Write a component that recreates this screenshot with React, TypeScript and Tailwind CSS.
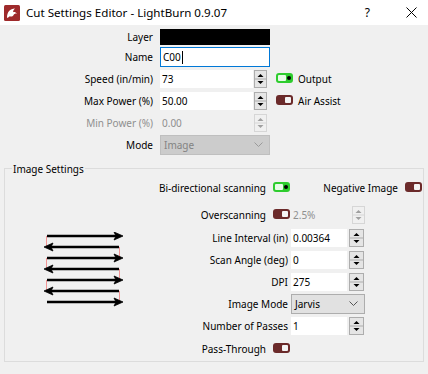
import React from "react";

const font = "font-['Noto_Sans',sans-serif]";

function Spin({ w = 12, disabled = false }: { w?: number; disabled?: boolean }) {
  const c = w / 2;
  const line = disabled ? "#d6d6d6" : "#adadad";
  const tri = disabled ? "#a0a0a0" : "#000000";
  return (
    <svg width={w} height={18} className="shrink-0">
      <rect x={0.5} y={0.5} width={w - 1} height={17} fill={disabled ? "#f0f0f0" : "#e5e5e5"} stroke={line} />
      <line x1={1} x2={w - 1} y1={9} y2={9} stroke={line} />
      <polygon points={`${c - 3},7 ${c + 3},7 ${c},4`} fill={tri} />
      <polygon points={`${c - 3},11 ${c + 3},11 ${c},14`} fill={tri} />
    </svg>
  );
}

function ToggleOn() {
  return (
    <span className="relative inline-block w-[17px] h-[10px] shrink-0 rounded-[3px] bg-[#2ecc2e]">
      <span className="absolute left-[2px] top-[2px] w-[8px] h-[6px] rounded-[1px] bg-[#e8fbe8]" />
      <span className="absolute left-[11px] top-[3px] w-[4px] h-[4px] rounded-full bg-black" />
    </span>
  );
}

function ToggleOff() {
  return (
    <span className="relative inline-block w-[17px] h-[10px] shrink-0 rounded-[3px] bg-[#6b2a2a]">
      <span className="absolute right-[2px] top-[2px] w-[6px] h-[6px] rounded-[1px] bg-[#f4f4f4]" />
    </span>
  );
}

function Chevron({ color }: { color: string }) {
  return (
    <svg width={9} height={6} className="shrink-0">
      <polyline points="0.5,0.5 4.5,4.5 8.5,0.5" fill="none" stroke={color} strokeWidth={1} />
    </svg>
  );
}

function TopRow({ label, disabled, children, h = "h-[22px]" }: { label: string; disabled?: boolean; children: React.ReactNode; h?: string }) {
  return (
    <div className={`flex items-center ${h}`}>
      <div className={`w-[153px] text-right ${disabled ? "text-[#8f8f8f]" : "text-black"}`}>{label}</div>
      <div className="ml-[7px] flex items-center">{children}</div>
    </div>
  );
}

function ImgRow({ label, children }: { label: string; children: React.ReactNode }) {
  return (
    <div className="flex items-center h-[22px]">
      <div className="w-[133px] text-right whitespace-nowrap">{label}</div>
      <div className="ml-[3px] flex items-center">{children}</div>
    </div>
  );
}

function NumField({ value }: { value: string }) {
  return (
    <>
      <div className="w-[56px] h-[18px] bg-white flex items-center pl-[2px]">{value}</div>
      <div className="ml-[2px]">
        <Spin w={15} />
      </div>
    </>
  );
}

function ScanArrows() {
  const ys = [4, 15, 26, 37, 48, 59, 70];
  return (
    <svg width={86} height={76}>
      {ys.map((y, i) =>
        i < ys.length - 1 ? (
          <line
            key={"r" + i}
            x1={i % 2 === 0 ? 5.5 : 78.5}
            x2={i % 2 === 0 ? 5.5 : 78.5}
            y1={y}
            y2={ys[i + 1]}
            stroke="#f19595"
            strokeWidth={1}
          />
        ) : null
      )}
      {ys.map((y, i) =>
        i % 2 === 0 ? (
          <g key={"a" + i}>
            <line x1={6} x2={76} y1={y} y2={y} stroke="#000" strokeWidth={2.5} />
            <polygon points={`82,${y} 73,${y - 4} 75,${y} 73,${y + 4}`} fill="#000" stroke="#000" strokeWidth={0.8} />
          </g>
        ) : (
          <g key={"a" + i}>
            <line x1={9} x2={78} y1={y} y2={y} stroke="#000" strokeWidth={2.5} />
            <polygon points={`3,${y} 12,${y - 4} 10,${y} 12,${y + 4}`} fill="#000" stroke="#000" strokeWidth={0.8} />
          </g>
        )
      )}
    </svg>
  );
}

export default function App() {
  return (
    <div className={`w-[428px] h-[374px] bg-[#f0f0f0] text-[10px] text-black overflow-hidden ${font}`}>
      {/* title bar */}
      <div className="h-[25px] bg-white flex items-center">
        <svg width={16} height={16} className="ml-[4px] shrink-0">
          <rect x={0} y={0} width={16} height={16} rx={1.5} fill="#9e2a2b" />
          <path d="M3 13 C3 7 6 3.5 11 3.5 C9.5 5 9 6 9.2 7.2 C10.5 6.8 12 7.4 13 8.6 C11.5 8.3 10.2 8.8 9.6 10 C8.8 11.5 7 12 5.8 11.2 C5 12 4.2 12.7 3 13 Z" fill="#ffffff" />
          <circle cx={10.6} cy={5.8} r={0.8} fill="#9e2a2b" />
        </svg>
        <div className="ml-[6px] text-[11.6px] leading-none">Cut Settings Editor - LightBurn 0.9.07</div>
        <div className="ml-auto text-[12px] leading-none mr-[36px]">?</div>
        <svg width={11} height={11} className="mr-[11px] shrink-0">
          <line x1={0.5} y1={0.5} x2={10.5} y2={10.5} stroke="#000" strokeWidth={1} />
          <line x1={10.5} y1={0.5} x2={0.5} y2={10.5} stroke="#000" strokeWidth={1} />
        </svg>
      </div>

      {/* top form */}
      <div className="pt-[3px]">
        <TopRow label="Layer" h="h-[18px]">
          <div className="w-[110px] h-[16px] bg-black" />
        </TopRow>
        <TopRow label="Name">
          <div className="w-[110px] h-[20px] bg-white border border-[#0078d7] flex items-center pl-[2px]">
            C00<span className="inline-block w-[1px] h-[13px] bg-black ml-[1px]" />
          </div>
        </TopRow>
        <TopRow label="Speed (in/min)">
          <div className="w-[93px] h-[18px] bg-white flex items-center pl-[2px]">73</div>
          <div className="ml-[1px]">
            <Spin w={13} />
          </div>
          <div className="ml-[9px]">
            <ToggleOn />
          </div>
          <div className="ml-[5px]">Output</div>
        </TopRow>
        <TopRow label="Max Power (%)">
          <div className="w-[93px] h-[18px] bg-white flex items-center pl-[2px]">50.00</div>
          <div className="ml-[1px]">
            <Spin w={13} />
          </div>
          <div className="ml-[9px]">
            <ToggleOff />
          </div>
          <div className="ml-[5px]">Air Assist</div>
        </TopRow>
        <TopRow label="Min Power (%)" disabled>
          <div className="w-[93px] h-[18px] flex items-center pl-[2px] text-[#8f8f8f]">0.00</div>
          <div className="ml-[1px]">
            <Spin w={13} disabled />
          </div>
        </TopRow>
        <TopRow label="Mode">
          <div className="w-[110px] h-[20px] bg-[#cccccc] border border-[#bfbfbf] flex items-center pl-[3px] pr-[6px] text-[#838383]">
            <span>Image</span>
            <span className="ml-auto">
              <Chevron color="#9a9a9a" />
            </span>
          </div>
        </TopRow>
      </div>

      {/* image settings group */}
      <div className="relative mx-[4px] mt-[12px] h-[194px] border border-[#dcdcdc]">
        <div className="absolute left-[7px] top-[-7px] px-[1px] bg-[#f0f0f0] leading-none h-[13px] flex items-center">Image Settings</div>

        <div className="pt-[8px]">
          <div className="flex items-center h-[22px]">
            <div className="w-[261px] text-right whitespace-nowrap">Bi-directional scanning</div>
            <div className="ml-[7px]">
              <ToggleOn />
            </div>
            <div className="flex-1 text-right whitespace-nowrap">Negative Image</div>
            <div className="ml-[7px] mr-[1px]">
              <ToggleOff />
            </div>
          </div>

          <div className="flex items-center h-[22px] mt-[5px]">
            <div className="w-[261px] text-right">Overscanning</div>
            <div className="ml-[7px]">
              <ToggleOff />
            </div>
            <div className="ml-[3px] w-[59px] text-[#8f8f8f]">2.5%</div>
            <Spin w={13} disabled />
          </div>

          <div className="flex mt-[1px]">
            <div className="w-[150px] pl-[36px] pt-[5px]">
              <ScanArrows />
            </div>
            <div className="flex flex-col">
              <ImgRow label="Line Interval (in)">
                <NumField value="0.00364" />
              </ImgRow>
              <ImgRow label="Scan Angle (deg)">
                <NumField value="0" />
              </ImgRow>
              <ImgRow label="DPI">
                <NumField value="275" />
              </ImgRow>
              <ImgRow label="Image Mode">
                <div className="w-[74px] h-[20px] bg-[#e1e1e1] border border-[#adadad] flex items-center pl-[3px] pr-[6px]">
                  <span>Jarvis</span>
                  <span className="ml-auto">
                    <Chevron color="#555555" />
                  </span>
                </div>
              </ImgRow>
              <ImgRow label="Number of Passes">
                <NumField value="1" />
              </ImgRow>
            </div>
          </div>

          <div className="flex items-center h-[22px] mt-[1px]">
            <div className="w-[261px] text-right">Pass-Through</div>
            <div className="ml-[7px]">
              <ToggleOff />
            </div>
          </div>
        </div>
      </div>
    </div>
  );
}
